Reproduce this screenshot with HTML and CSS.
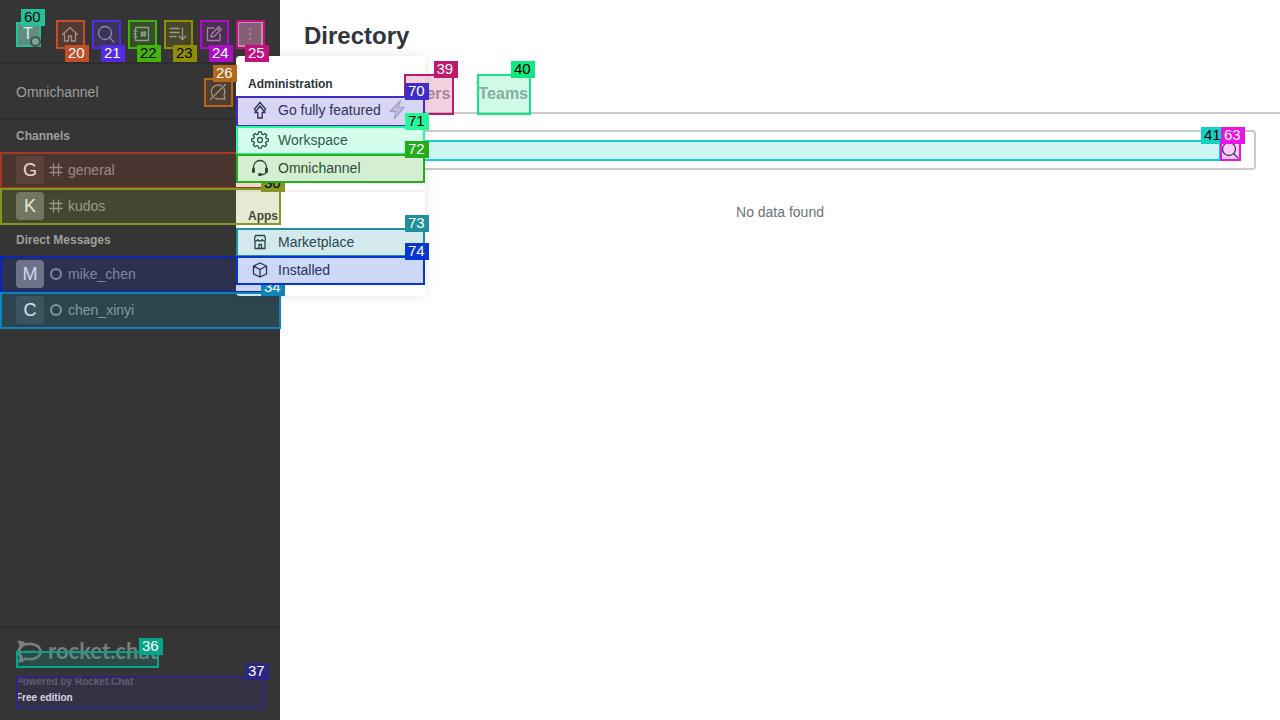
FILE: index.html
```html
<!DOCTYPE html>
<html lang="en">
<head>
<meta charset="utf-8">
<meta name="viewport" content="width=device-width, initial-scale=1">
<title>Directory</title>
<link rel="stylesheet" href="styles.css">
</head>
<body>
<div class="app">
  <aside class="sidebar">
    <header class="toolbar">
      <button class="user" aria-label="User menu">T<i class="presence"></i><span class="mark c60"><b>60</b></span></button>
      <div class="tools">
        <button class="tool" aria-label="Home"><svg viewBox="0 0 20 20"><path d="M2.5 10.5 10 3.5l7.500 7M4.500 9v8h4v-5h3v5h4V9"/></svg><span class="mark below c20"><b>20</b></span></button>
        <button class="tool" aria-label="Search"><svg viewBox="0 0 20 20"><circle cx="9" cy="9" r="6.500"/><path d="m13.500 13.500 4.500 4.500"/></svg><span class="mark below c21"><b>21</b></span></button>
        <button class="tool" aria-label="Directory"><svg viewBox="0 0 20 20"><path d="M3.500 6V3.500h13v13h-13V14M3.500 8.500v3M2 7.200h3M2 12.800h3M2 10h2M10.500 7.500l-.6 5M13 7.500l-.6 5M9 9h5M8.800 11h5"/></svg><span class="mark below dark c22"><b>22</b></span></button>
        <button class="tool" aria-label="Sort"><svg viewBox="0 0 20 20"><path d="M2 4.500h9M2 8.500h9M2 12.500h6M14.500 4v11.500M11 12l3.500 3.500L18 12"/></svg><span class="mark below dark c23"><b>23</b></span></button>
        <button class="tool" aria-label="Create new"><svg viewBox="0 0 20 20"><path d="M10 4H3.500v12.500H16V10M7 13l.8-3.300 7-7 2.500 2.500-7 7zM13.200 4.200l2.500 2.500"/></svg><span class="mark below c24"><b>24</b></span></button>
        <button class="tool pressed" aria-label="Administration" aria-expanded="true"><svg class="solid" viewBox="0 0 20 20"><circle cx="10" cy="5" r="1.200"/><circle cx="10" cy="10" r="1.200"/><circle cx="10" cy="15" r="1.200"/></svg><span class="mark below c25"><b>25</b></span></button>
      </div>
    </header>
    <section class="omni">
      <span>Omnichannel</span>
      <button class="tool" aria-label="Turn on answer chats"><svg viewBox="0 0 20 20"><path d="M5 14.500A7 7 0 0 1 13.500 3.700M16 6.500a7 7 0 0 1 0 7l1 3.300h-7a7 7 0 0 1-3-.5M2.500 17.500l15-15"/></svg><span class="mark c26"><b>26</b></span></button>
    </section>
    <nav class="rooms">
      <h2 class="group">Channels</h2>
      <a class="room" href="#general"><span class="avatar red">G</span><svg viewBox="0 0 14 14"><path d="M4.500 1v12M9.500 1v12M1 4.500h12M1 9.500h12"/></svg><span>general</span><span class="mark c29"><b>29</b></span></a>
      <a class="room" href="#kudos"><span class="avatar olive">K</span><svg viewBox="0 0 14 14"><path d="M4.500 1v12M9.500 1v12M1 4.500h12M1 9.500h12"/></svg><span>kudos</span><span class="mark dark c30"><b>30</b></span></a>
      <h2 class="group">Direct Messages</h2>
      <a class="room" href="#mike_chen"><span class="avatar violet">M</span><svg class="ring" viewBox="0 0 14 14"><circle cx="7" cy="7" r="5"/></svg><span>mike_chen</span><span class="mark c33"><b>33</b></span></a>
      <a class="room" href="#chen_xinyi"><span class="avatar slate">C</span><svg class="ring" viewBox="0 0 14 14"><circle cx="7" cy="7" r="5"/></svg><span>chen_xinyi</span><span class="mark c34"><b>34</b></span></a>
    </nav>
    <footer class="foot">
      <a class="brand" href="#home">
        <svg viewBox="0 0 28 26"><path class="shape" fill-rule="evenodd" d="M0 1c4-.8 7 .2 9 2.200C18 1 27 5.500 27 12.500S18 24 9 21.500C7 24 4 25 0 24c2-2 2.800-4 2-6.500C-.5 14-.5 10.500 2 7.500 2.800 5 2 3 0 1zM6 8C3 10.500 3 14.500 6 17c.6 1.300.4 2.500-.2 3.500 1.200-.3 1.700-.8 2.200-1.700 8 2.200 16-.8 16-6.300S16 4 7.500 6.500c-.5 0-1 .8-1.500 1.500z"/><g class="shape"><circle cx="9" cy="12.500" r="1.300"/><circle cx="13.500" cy="12.500" r="1.300"/><circle cx="18" cy="12.500" r="1.300"/></g></svg>
        <span>rocket.chat</span>
        <span class="mark c36"><b>36</b></span>
      </a>
      <div class="edition"><a href="#powered">Powered by Rocket.Chat</a><strong>Free edition</strong><span class="mark c37"><b>37</b></span></div>
    </footer>
  </aside>
  <main class="main">
    <h1>Directory</h1>
    <div class="tabs" role="tablist">
      <button class="tab active" role="tab">Channels</button>
      <button class="tab" role="tab">Users<span class="mark c39"><b>39</b></span></button>
      <button class="tab" role="tab">Teams<span class="mark dark c40"><b>40</b></span></button>
    </div>
    <div class="search">
      <label class="field"><input type="text" aria-label="Search"><span class="mark dark c41"><b>41</b></span></label>
      <button class="go" aria-label="Search"><svg viewBox="0 0 20 20"><circle cx="9" cy="9" r="6.500"/><path d="m13.500 13.500 4.500 4.500"/></svg><span class="mark c63"><b>63</b></span></button>
    </div>
    <p class="empty">No data found</p>
  </main>
  <div class="menu">
    <h3>Administration</h3>
    <button class="item tall"><svg viewBox="0 0 20 20"><path d="M10 2.500 4.500 9l.5 1.500M10 2.500 15.500 9l-.5 1.500M10 6l-5 6.500h2.800v5.500h4.400v-5.500H15z"/></svg><span>Go fully featured</span><svg class="bolt" viewBox="2 1 16 20"><path d="M13.500 1.500 3 12.500h6l-1.500 7 9.500-11h-6z"/></svg><span class="mark c70"><b>70</b></span></button>
    <button class="item"><svg viewBox="0 0 20 20"><path d="m8.600 2-.4 2.100-1.400.6L5 3.500 3.200 5.300l1.200 1.800-.6 1.400-2.100.4v2.400l2.100.4.6 1.400-1.200 1.800L5 16.700l1.800-1.200 1.400.6.4 2.100h2.800l.4-2.100 1.400-.6 1.800 1.200 1.800-1.800-1.200-1.800.6-1.400 2.100-.4V8.900l-2.100-.4-.6-1.400 1.200-1.800L15 3.500l-1.800 1.200-1.400-.6-.4-2.100z"/><circle cx="10" cy="10" r="2.500"/></svg><span>Workspace</span><span class="mark dark c71"><b>71</b></span></button>
    <button class="item"><svg viewBox="0 0 20 20"><path d="M3.500 10V9a6.500 6.500 0 0 1 13 0v1M16.500 13c0 2-2 3.500-5 3.500"/><path class="thick" d="M3.500 11v2.500M16.500 11v2.500M9.500 16.500h1"/></svg><span>Omnichannel</span><span class="mark c72"><b>72</b></span></button>
    <hr>
    <h3>Apps</h3>
    <button class="item"><svg viewBox="0 0 20 20"><path d="M5 9.500v7h10v-7M5.500 3.500h9L15.500 7c0 2.500-2.500 2.500-3.300.5-.7 2-3.700 2-4.400 0C7 9.500 4.500 9.500 4.500 7z"/><path d="M9 16.500v-4h2.500v4"/></svg><span>Marketplace</span><span class="mark c73"><b>73</b></span></button>
    <button class="item"><svg viewBox="0 0 20 20"><path d="m10 3 6.500 3v8L10 17l-6.500-3V6zM3.500 6 10 9.500 16.500 6M10 9.500V17"/></svg><span>Installed</span><span class="mark c74"><b>74</b></span></button>
  </div>
</div>
</body>
</html>
```
FILE: styles.css
```css
* { box-sizing: border-box; }
body {
  margin: 0;
  background: #fff;
  color: #2f343d;
  font: 14px/20px "Liberation Sans", Arial, sans-serif;
}
button { border: 0; padding: 0; background: none; color: inherit; font: inherit; }
a { color: inherit; text-decoration: none; }
h1, h2, h3, p { margin: 0; }
svg {
  flex: none;
  width: 20px;
  height: 20px;
  fill: none;
  stroke: currentColor;
  stroke-width: 1.3;
  stroke-linejoin: round;
  stroke-linecap: round;
}
.solid, .shape { fill: currentColor; stroke: none; }
.thick { stroke-width: 3; }

.app { position: relative; display: flex; min-height: 100vh; }

/* Numbered outlines laid over the controls */
.mark {
  position: absolute;
  z-index: 1;
  inset: 0 -1px -1px 0;
  border: 2px solid var(--c);
  pointer-events: none;
}
.mark::before {
  content: "";
  position: absolute;
  inset: 0;
  background: var(--c);
  opacity: 0.2;
}
.mark b {
  position: absolute;
  top: -15px;
  right: -6px;
  width: 24px;
  height: 17px;
  padding: 0 3px;
  background: var(--c);
  color: #fff;
  font: 15px/16px "Liberation Sans", Arial, sans-serif;
  text-align: left;
}
.mark.below b { top: auto; bottom: -15px; }
.mark.dark b { color: #000; }
.c60 { --c: #25c19b; }
.mark.c60 b { color: #000; }
.c20 { --c: #c34e2a; }
.c21 { --c: #532be6; }
.c22 { --c: #42b40a; }
.c23 { --c: #918e05; }
.c24 { --c: #ad10c4; }
.c25 { --c: #c60f7f; }
.c26 { --c: #b5671d; }
.c29 { --c: #a23a22; }
.c30 { --c: #869624; }
.c33 { --c: #0a26b4; }
.c34 { --c: #0f84b8; }
.c36 { --c: #06a68a; }
.c37 { --c: #2c2584; }
.c39 { --c: #be196b; }
.c40 { --c: #12e881; }
.c41 { --c: #12d1c5; }
.c63 { --c: #e813e8; }
.c70 { --c: #3e2dcb; }
.c71 { --c: #26f79d; }
.c72 { --c: #26ab1a; }
.c73 { --c: #21909c; }
.c74 { --c: #0737d2; }

.sidebar {
  display: flex;
  flex: none;
  flex-direction: column;
  width: 280px;
  background: #353535;
  color: #9e9e9e;
}
.toolbar {
  display: flex;
  justify-content: space-between;
  padding: 20px 16px 14px;
  border-bottom: 2px solid #2d2d2d;
}
.user {
  position: relative;
  width: 24px;
  height: 24px;
  margin-top: 2px;
  background: #6e8079;
  color: #fff;
  font-size: 16px;
  line-height: 24px;
}
.presence {
  position: absolute;
  right: -1px;
  bottom: -1px;
  z-index: 2;
  width: 11px;
  height: 11px;
  border: 2px solid #40544e;
  border-radius: 50%;
  background: #7d9f94;
}
.tools { display: flex; gap: 8px; }
.tool {
  position: relative;
  display: grid;
  place-items: center;
  width: 28px;
  height: 28px;
}
.pressed { border: 3px solid #b5b5b5; background: #767476; }
.pressed .mark { inset: -3px -4px -4px -3px; }
.omni {
  display: flex;
  align-items: center;
  justify-content: space-between;
  padding: 14px 48px 12px 16px;
  border-bottom: 2px solid #2d2d2d;
}
.rooms { flex: 1; }
.group { padding: 6px 16px; font-size: 12px; line-height: 20px; }
.room {
  position: relative;
  display: flex;
  align-items: center;
  height: 36px;
  padding: 0 16px;
}
.room svg { width: 14px; height: 14px; margin: 0 5px; }
.room .ring { stroke-width: 2; }
.avatar {
  width: 28px;
  height: 28px;
  border-radius: 4px;
  color: #fff;
  font-size: 18px;
  line-height: 28px;
  text-align: center;
}
.red { background: #4b4444; }
.olive { background: #707070; }
.violet { background: #85857e; }
.slate { background: #474a4a; }

.foot { padding: 12px 16px; border-top: 2px solid #2d2d2d; }
.brand {
  position: relative;
  display: flex;
  align-items: flex-start;
  gap: 4px;
  width: 142px;
  height: 27px;
  color: #7d7d7d;
  font: bold 22px/22px Lato, sans-serif;
}
.brand svg { width: 28px; height: 24px; }
.brand .mark { top: 11px; }
.edition {
  position: relative;
  margin-top: 9px;
  font-size: 10px;
  font-weight: bold;
  line-height: 16px;
  color: #6c6c70;
}
.edition a, .edition strong { display: block; line-height: 12px; }
.edition strong { margin-top: 4px; padding-bottom: 4px; color: #fff; }

.main { flex: 1; min-width: 0; }
h1 { padding: 20px 24px 22px; font-size: 24px; line-height: 32px; }
.tabs {
  display: flex;
  gap: 24px;
  padding: 0 24px;
  border-bottom: 2px solid #cbcbcb;
}
.tab {
  position: relative;
  height: 40px;
  margin-bottom: -2px;
  padding: 0 2px;
  color: #9ea2a8;
  font-size: 16px;
  font-weight: bold;
}
.active { color: #156ff5; }
.search {
  display: flex;
  margin: 16px 24px 0;
  padding: 8px 14px;
  border: 2px solid #cbcbcb;
  border-radius: 4px;
}
.field { position: relative; flex: 1; height: 20px; }
.field input {
  display: block;
  width: 100%;
  height: 20px;
  padding: 0;
  border: 0;
  outline: 0;
  background: none;
  font: inherit;
}
.go { position: relative; height: 20px; }
.go svg { display: block; }
.empty { margin-top: 32px; color: #6c727a; text-align: center; }

.menu {
  position: absolute;
  top: 56px;
  left: 236px;
  width: 189px;
  padding: 12px 0;
  border-radius: 4px;
  background: #fff;
  box-shadow: 0 0 12px rgba(47, 52, 61, 0.12);
}
.menu h3 { padding: 6px 12px 2px; font-size: 12px; line-height: 20px; }
.item {
  position: relative;
  z-index: 2;
  display: flex;
  align-items: center;
  gap: 8px;
  width: 100%;
  height: 28px;
  padding: 0 14px;
  background: #fff;
}
.item.tall { height: 30px; padding-bottom: 2px; }
.item .mark { right: 0; }
.item .bolt { width: 16px; color: #c0c0c8; fill: #e4e4ea; }
.menu hr { height: 2px; margin: 8px 0; border: 0; background: #f0f0f0; }
```
